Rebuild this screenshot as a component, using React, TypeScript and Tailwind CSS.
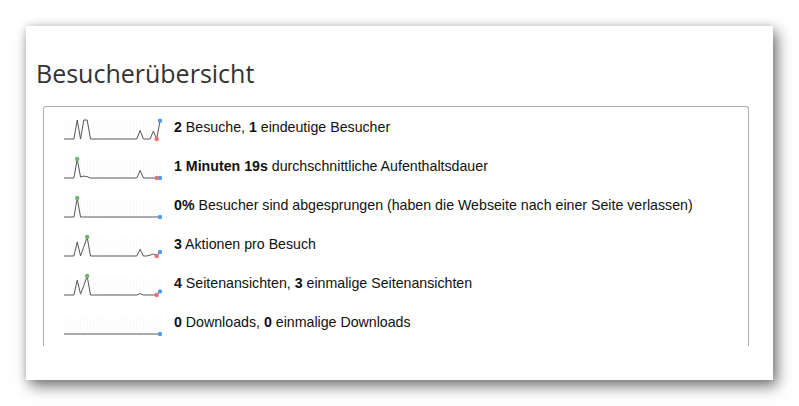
type Spark = {
  values: Record<number, number>;
  min?: number;
  max?: number;
  last: number;
};

type Row = {
  spark: Spark;
  text: React.ReactNode;
};

const POINTS = 30;
const STEP = 96 / (POINTS - 1);
const BASE = 21;
const H = 19;

function Sparkline({ spark }: { spark: Spark }) {
  const pts = Array.from({ length: POINTS }, (_, i) => {
    const v = spark.values[i] ?? 0;
    return [i * STEP, BASE - v * H] as const;
  });
  const d = pts.map(([x, y], i) => `${i === 0 ? "M" : "L"}${x.toFixed(2)} ${y.toFixed(2)}`).join(" ");
  const dot = (i: number | undefined, color: string) => {
    if (i === undefined) return null;
    const [x, y] = pts[i];
    return <circle cx={x} cy={y} r={2.2} fill={color} />;
  };

  return (
    <svg width="100" height="24" viewBox="0 0 100 24" className="shrink-0 overflow-visible">
      {pts.map(([x], i) => (
        <line key={i} x1={x} x2={x} y1={2} y2={BASE} stroke="#fafafa" strokeWidth="1" />
      ))}
      <path d={d} fill="none" stroke="#555" strokeWidth="1" strokeLinejoin="miter" />
      {dot(spark.max, "#6cb86c")}
      {dot(spark.min, "#f06c6c")}
      {dot(spark.last, "#4d9df5")}
    </svg>
  );
}

const rows: Row[] = [
  {
    spark: { values: { 4: 1, 6: 1, 7: 1, 23: 0.45, 27: 0.42, 29: 0.96 }, min: 28, last: 29 },
    text: (
      <>
        <b>2</b> Besuche, <b>1</b> eindeutige Besucher
      </>
    ),
  },
  {
    spark: { values: { 4: 1, 5: 0.05, 6: 0.1, 7: 0.07, 23: 0.4 }, max: 4, min: 28, last: 29 },
    text: (
      <>
        <b>1 Minuten 19s</b> durchschnittliche Aufenthaltsdauer
      </>
    ),
  },
  {
    spark: { values: { 4: 1 }, max: 4, last: 29 },
    text: (
      <>
        <b>0%</b> Besucher sind abgesprungen (haben die Webseite nach einer Seite verlassen)
      </>
    ),
  },
  {
    spark: { values: { 4: 0.74, 6: 0.5, 7: 1, 23: 0.35, 26: 0.05, 27: 0.1, 29: 0.21 }, max: 7, min: 28, last: 29 },
    text: (
      <>
        <b>3</b> Aktionen pro Besuch
      </>
    ),
  },
  {
    spark: { values: { 4: 0.78, 5: 0.05, 6: 0.5, 7: 1, 23: 0.07, 29: 0.19 }, max: 7, min: 28, last: 29 },
    text: (
      <>
        <b>4</b> Seitenansichten, <b>3</b> einmalige Seitenansichten
      </>
    ),
  },
  {
    spark: { values: {}, last: 29 },
    text: (
      <>
        <b>0</b> Downloads, <b>0</b> einmalige Downloads
      </>
    ),
  },
];

export default function App() {
  return (
    <div className="h-[406px] w-[799px] overflow-hidden bg-white p-[26px]">
      <div className="h-[354px] w-[747px] bg-white pt-[32px] shadow-[4px_6px_14px_rgba(0,0,0,0.55),0_0_8px_rgba(0,0,0,0.12)]">
        <h2 className="pl-[10px] font-['Open_Sans',sans-serif] text-[25px] leading-[30px] text-[#333]">
          Besucherübersicht
        </h2>
        <div className="ml-[17px] mt-[18px] h-[240px] w-[706px] rounded-t-[3px] border border-b-0 border-[#b4b2aa] pl-[20px] pt-[11px]">
          {rows.map((row, i) => (
            <div key={i} className="flex h-[39px] items-start">
              <Sparkline spark={row.spark} />
              <p className="ml-[10px] mt-[1px] font-['Liberation_Sans',Arial,sans-serif] text-[14.2px] leading-[16px] text-[#111]">
                {row.text}
              </p>
            </div>
          ))}
        </div>
      </div>
    </div>
  );
}
